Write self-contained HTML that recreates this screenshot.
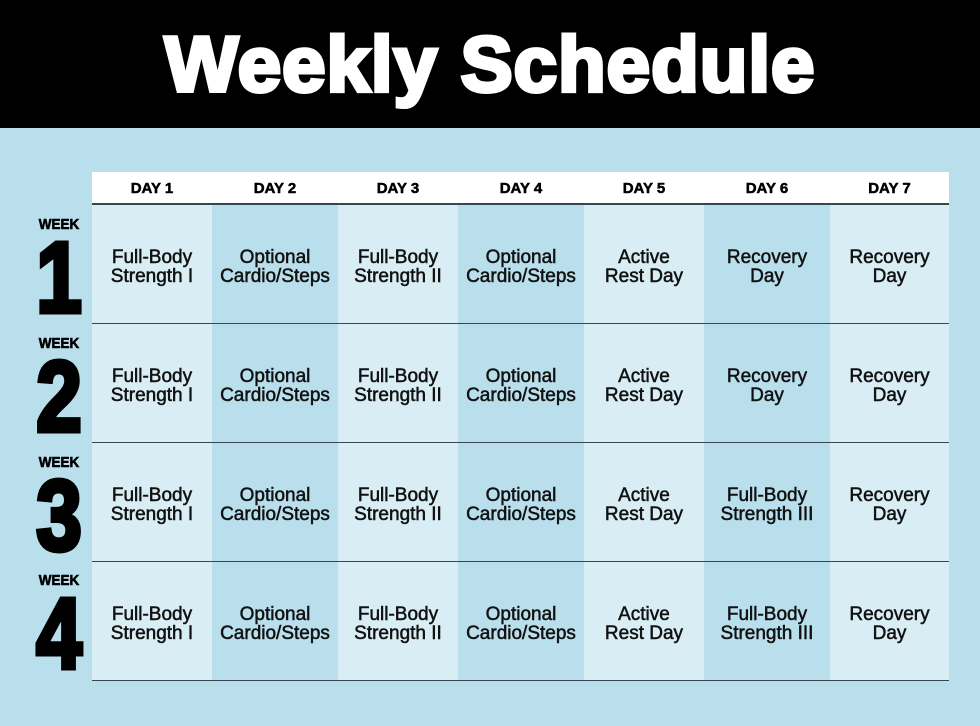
<!DOCTYPE html>
<html><head><style>
*{margin:0;padding:0;box-sizing:border-box}
body{width:980px;height:726px;background:#b9dfed;font-family:"Liberation Sans",sans-serif;position:relative;overflow:hidden}
.hdr{position:absolute;left:0;top:0;width:980px;height:128px;background:#000;color:#fff;text-align:center}
.hdr span{display:inline-block;font-weight:bold;font-size:78px;line-height:128px;-webkit-text-stroke:4px #fff;letter-spacing:1px}
.tbl{position:absolute;left:92px;top:172px;width:857px}
.head{position:absolute;left:0;top:0;height:33px;width:857px;background:#fff;border-bottom:2px solid #37474f}
.hc{position:absolute;top:0;height:33px;line-height:33px;text-align:center;font-weight:bold;font-size:15px;-webkit-text-stroke:0.5px #000}
.col{position:absolute;top:33px;height:476px}
.row{position:absolute;left:0;width:857px;border-bottom:1.5px solid #37474f}
.cell{position:absolute;display:flex;align-items:center;justify-content:center;text-align:center;font-size:19px;line-height:19px;color:#111;height:119px;padding-top:4px;-webkit-text-stroke:0.5px #111}
.wk{position:absolute;left:13px;width:92px;text-align:center;color:#000}
.wk .w{font-weight:bold;font-size:15px;display:block;-webkit-text-stroke:0.6px #000;transform:scaleX(.9)}
.wk .n{font-weight:bold;font-size:100px;line-height:86px;display:block;-webkit-text-stroke:5px #000;margin-top:2px;transform:scaleX(.82)}
</style></head><body>
<div class="hdr"><span>Weekly Schedule</span></div>
<div class="tbl">
<div class="col" style="left:0;width:120px;background:#d9edf5"></div>
<div class="col" style="left:120px;width:126px;background:#b9dfed"></div>
<div class="col" style="left:246px;width:120px;background:#d9edf5"></div>
<div class="col" style="left:366px;width:126px;background:#b9dfed"></div>
<div class="col" style="left:492px;width:120px;background:#d9edf5"></div>
<div class="col" style="left:612px;width:126px;background:#b9dfed"></div>
<div class="col" style="left:738px;width:119px;background:#d9edf5"></div>
<div class="head"></div>
<div class="hc" style="left:0;width:120px">DAY 1</div>
<div class="hc" style="left:120px;width:126px">DAY 2</div>
<div class="hc" style="left:246px;width:120px">DAY 3</div>
<div class="hc" style="left:366px;width:126px">DAY 4</div>
<div class="hc" style="left:492px;width:120px">DAY 5</div>
<div class="hc" style="left:612px;width:126px">DAY 6</div>
<div class="hc" style="left:738px;width:119px">DAY 7</div>
<div class="row" style="top:33px;height:119px"></div>
<div class="row" style="top:152px;height:119px"></div>
<div class="row" style="top:271px;height:119px"></div>
<div class="row" style="top:390px;height:119px"></div>
</div>
<div style="position:absolute;left:92px;top:205px;width:857px">
<div style="position:absolute;top:0;left:0;width:857px;height:119px">
<div class="cell" style="left:0;width:120px">Full-Body<br>Strength I</div>
<div class="cell" style="left:120px;width:126px">Optional<br>Cardio/Steps</div>
<div class="cell" style="left:246px;width:120px">Full-Body<br>Strength II</div>
<div class="cell" style="left:366px;width:126px">Optional<br>Cardio/Steps</div>
<div class="cell" style="left:492px;width:120px">Active<br>Rest Day</div>
<div class="cell" style="left:612px;width:126px">Recovery<br>Day</div>
<div class="cell" style="left:738px;width:119px">Recovery<br>Day</div>
</div>
<div style="position:absolute;top:119px;left:0;width:857px;height:119px">
<div class="cell" style="left:0;width:120px">Full-Body<br>Strength I</div>
<div class="cell" style="left:120px;width:126px">Optional<br>Cardio/Steps</div>
<div class="cell" style="left:246px;width:120px">Full-Body<br>Strength II</div>
<div class="cell" style="left:366px;width:126px">Optional<br>Cardio/Steps</div>
<div class="cell" style="left:492px;width:120px">Active<br>Rest Day</div>
<div class="cell" style="left:612px;width:126px">Recovery<br>Day</div>
<div class="cell" style="left:738px;width:119px">Recovery<br>Day</div>
</div>
<div style="position:absolute;top:238px;left:0;width:857px;height:119px">
<div class="cell" style="left:0;width:120px">Full-Body<br>Strength I</div>
<div class="cell" style="left:120px;width:126px">Optional<br>Cardio/Steps</div>
<div class="cell" style="left:246px;width:120px">Full-Body<br>Strength II</div>
<div class="cell" style="left:366px;width:126px">Optional<br>Cardio/Steps</div>
<div class="cell" style="left:492px;width:120px">Active<br>Rest Day</div>
<div class="cell" style="left:612px;width:126px">Full-Body<br>Strength III</div>
<div class="cell" style="left:738px;width:119px">Recovery<br>Day</div>
</div>
<div style="position:absolute;top:357px;left:0;width:857px;height:119px">
<div class="cell" style="left:0;width:120px">Full-Body<br>Strength I</div>
<div class="cell" style="left:120px;width:126px">Optional<br>Cardio/Steps</div>
<div class="cell" style="left:246px;width:120px">Full-Body<br>Strength II</div>
<div class="cell" style="left:366px;width:126px">Optional<br>Cardio/Steps</div>
<div class="cell" style="left:492px;width:120px">Active<br>Rest Day</div>
<div class="cell" style="left:612px;width:126px">Full-Body<br>Strength III</div>
<div class="cell" style="left:738px;width:119px">Recovery<br>Day</div>
</div>
</div>
<div class="wk" style="top:216px"><span class="w">WEEK</span><span class="n">1</span></div>
<div class="wk" style="top:335px"><span class="w">WEEK</span><span class="n">2</span></div>
<div class="wk" style="top:454px"><span class="w">WEEK</span><span class="n">3</span></div>
<div class="wk" style="top:572px"><span class="w">WEEK</span><span class="n">4</span></div>
</body></html>
